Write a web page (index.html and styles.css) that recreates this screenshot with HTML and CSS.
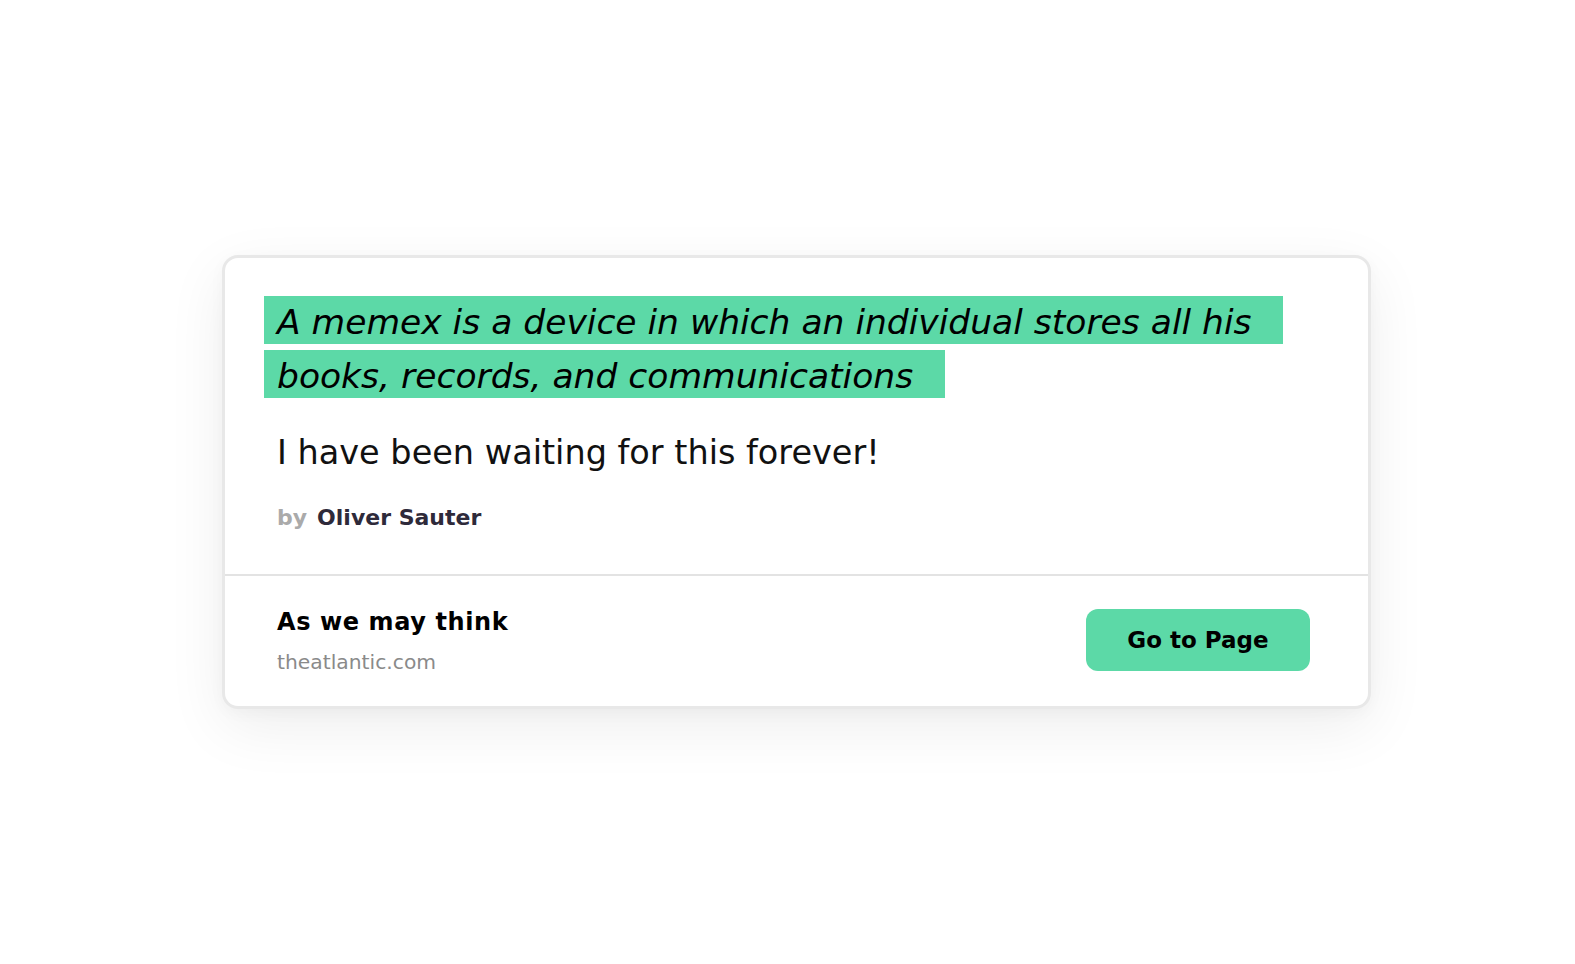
FILE: index.html
```html
<!DOCTYPE html>
<html lang="en">
<head>
<meta charset="utf-8">
<title>Memex highlight</title>
<link rel="stylesheet" href="styles.css">
</head>
<body>
  <article class="card">
    <section class="card-body">
      <p class="quote"><mark class="highlight">A memex is a device in which an individual stores all his books, records, and communications</mark></p>
      <p class="comment">I have been waiting for this forever!</p>
      <p class="byline"><span class="by">by</span><span class="author">Oliver Sauter</span></p>
    </section>
    <footer class="card-footer">
      <div class="source">
        <div class="source-title">As we may think</div>
        <div class="source-domain">theatlantic.com</div>
      </div>
      <a class="go-button" href="#">Go to Page</a>
    </footer>
  </article>
</body>
</html>
```
FILE: styles.css
```css
* { box-sizing: border-box; }

html, body {
  margin: 0;
  padding: 0;
  background: #ffffff;
}

body {
  min-height: 100vh;
  display: flex;
  justify-content: center;
  align-items: center;
  font-family: "DejaVu Sans", "Open Sans", sans-serif;
  color: #111111;
}

.card {
  width: 1149px;
  margin-left: 18px;
  background: #ffffff;
  border: 3px solid #e8e8e8;
  border-radius: 16px;
  box-shadow: 0 18px 60px rgba(0, 0, 0, 0.07), 0 4px 16px rgba(0, 0, 0, 0.03);
  overflow: hidden;
}

.card-body {
  padding: 37px 52px 40px 52px;
  border-bottom: 2px solid #e3e3e3;
}

.quote {
  margin: 0 0 25px -13px;
  font-size: 34.5px;
  line-height: 54px;
  font-style: italic;
  color: #000000;
}

.highlight {
  background: #5cd9a7;
  color: #000000;
  padding: 6px 32px 2px 13px;
  -webkit-box-decoration-break: clone;
  box-decoration-break: clone;
}

.comment {
  margin: 0 0 24px 0;
  font-size: 33.5px;
  line-height: 50px;
  color: #111111;
}

.byline {
  margin: 0;
  display: flex;
  gap: 10px;
  font-size: 22px;
  line-height: 32px;
  font-weight: 700;
}

.by { color: #aaaaaa; }
.author { color: #2e2a3a; }

.card-footer {
  height: 130px;
  padding: 0 58px 3px 52px;
  display: flex;
  align-items: center;
  justify-content: space-between;
}

.source {
  padding-top: 3px;
  display: flex;
  flex-direction: column;
  gap: 10px;
}

.source-title {
  font-size: 24px;
  line-height: 32px;
  font-weight: 700;
  letter-spacing: 0.6px;
  color: #000000;
}

.source-domain {
  font-size: 20.3px;
  line-height: 28px;
  color: #8a8a8a;
}

.go-button {
  width: 224px;
  height: 62px;
  border-radius: 12px;
  background: #5cd9a7;
  color: #000000;
  text-decoration: none;
  font-size: 23px;
  font-weight: 700;
  display: flex;
  align-items: center;
  justify-content: center;
}
```
